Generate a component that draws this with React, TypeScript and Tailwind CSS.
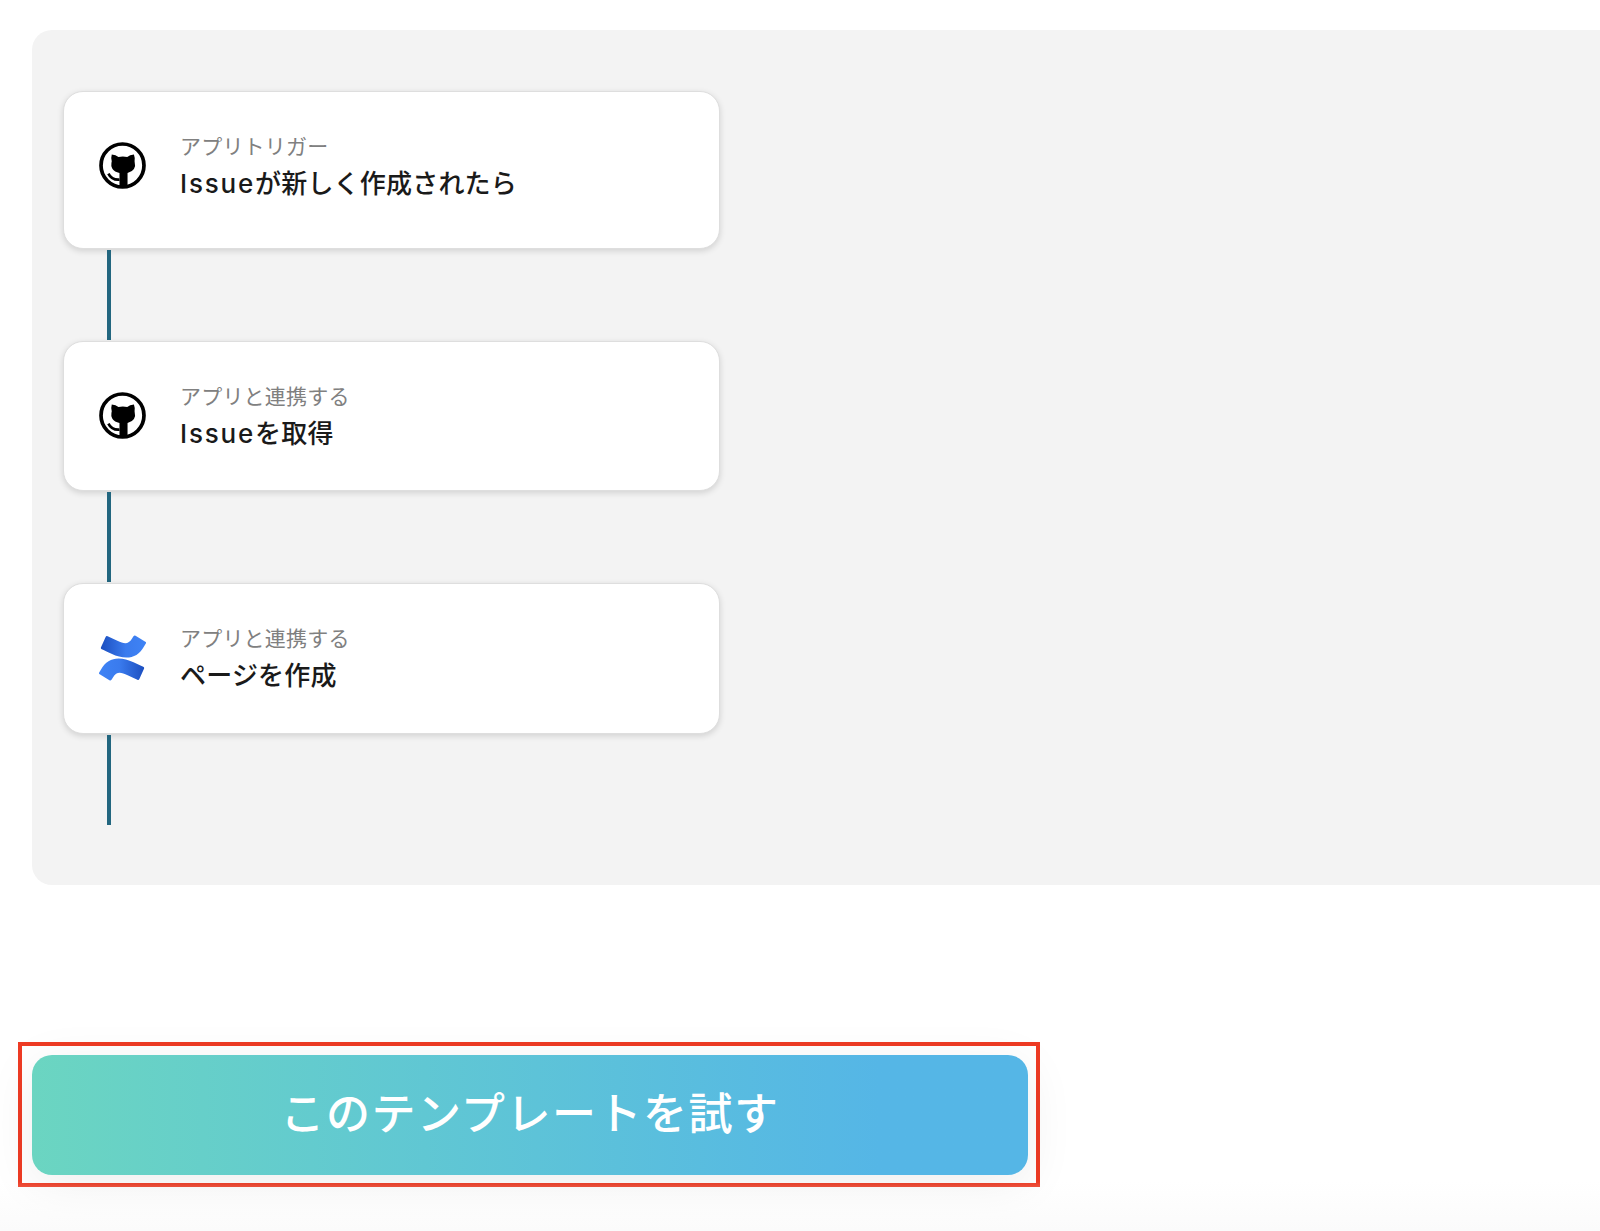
const FONT = "font-['Inter','Noto_Sans_CJK_JP','Noto_Sans',sans-serif]";

function GithubIcon() {
  return (
    <svg width="47" height="47" viewBox="0 0 140 140" className="shrink-0">
      <circle cx="70" cy="70" r="64" fill="#fff" stroke="#000" strokeWidth="11" />
      <path
        d="M38 37 Q50 38 58 45 Q71 42 84 45 Q92 38 104 37 Q108 48 106 57 Q113 85 85 92 L85 132 L61 132 L61 92 Q31 85 38 57 Q35 48 38 37 Z"
        fill="#000"
      />
      <path d="M28 94 Q38 114 61 112" fill="none" stroke="#000" strokeWidth="8" />
    </svg>
  );
}

function ConfluenceIcon() {
  return (
    <svg width="47" height="46" viewBox="0 0 24 24" preserveAspectRatio="none" className="shrink-0">
      <defs>
        <linearGradient id="confBottom" x1="0" y1="0" x2="1" y2="0">
          <stop offset="0" stopColor="#3f83f5" />
          <stop offset="0.45" stopColor="#3a7bee" />
          <stop offset="1" stopColor="#1c4fc0" />
        </linearGradient>
        <linearGradient id="confTop" x1="0" y1="0" x2="1" y2="0">
          <stop offset="0" stopColor="#1c4fc0" />
          <stop offset="0.55" stopColor="#3a7bee" />
          <stop offset="1" stopColor="#3f83f5" />
        </linearGradient>
      </defs>
      <path
        fill="url(#confBottom)"
        d="M.87 18.257c-.248.382-.53.875-.763 1.245a.764.764 0 0 0 .255 1.04l4.965 3.054a.764.764 0 0 0 1.058-.26c.199-.332.454-.763.733-1.221 1.967-3.247 3.945-2.853 7.508-1.146l4.957 2.337a.764.764 0 0 0 1.028-.382l2.364-5.346a.764.764 0 0 0-.382-1 599.851 599.851 0 0 1-4.965-2.361C10.911 10.97 4.503 11.2.87 18.257z"
      />
      <path
        fill="url(#confTop)"
        d="M23.131 5.743c.248-.382.53-.875.763-1.245a.764.764 0 0 0-.255-1.04L18.674.404a.764.764 0 0 0-1.058.26c-.199.332-.454.763-.733 1.221-1.967 3.247-3.945 2.853-7.508 1.146L4.418.694a.764.764 0 0 0-1.028.382L1.026 6.422a.764.764 0 0 0 .382 1c1.04.49 3.118 1.467 4.965 2.361 6.716 3.247 13.124 3.017 16.758-4.04z"
      />
    </svg>
  );
}

function FlowCard({ icon, label, title, height, pb }: { icon: React.ReactNode; label: string; title: React.ReactNode; height: string; pb: string }) {
  return (
    <div className={`${height} ${pb} w-[657px] flex items-center gap-[34px] pl-[35px] bg-white border border-[#dedede] rounded-[20px] shadow-[0_2px_6px_rgba(0,0,0,0.14)]`}>
      <div className="w-[47px] flex justify-center">{icon}</div>
      <div className="flex flex-col gap-[7px]">
        <p className="text-[21px] leading-[30px] tracking-[0.2px] text-[#808080]">{label}</p>
        <p className="text-[26px] leading-[30px] tracking-[0.2px] font-medium text-[#1a1a1a]">{title}</p>
      </div>
    </div>
  );
}

function Connector() {
  return <div className="ml-[44px] w-[4px] h-[90px] my-[1px] bg-[#22667f]" />;
}

const issue = <span className="tracking-[1.8px]">Issue</span>;

export default function App() {
  return (
    <div className={`${FONT} relative h-[1231px] overflow-hidden bg-white pt-[30px]`}>
      <div className="ml-[32px] h-[855px] rounded-l-[20px] bg-[#f3f3f3] pt-[61px] pl-[31px]">
        <FlowCard height="h-[158px]" pb="pb-[10px]" icon={<GithubIcon />} label="アプリトリガー" title={<>{issue}が新しく作成されたら</>} />
        <Connector />
        <FlowCard height="h-[150px]" pb="pb-[2px]" icon={<GithubIcon />} label="アプリと連携する" title={<>{issue}を取得</>} />
        <Connector />
        <FlowCard height="h-[151px]" pb="pb-[2px]" icon={<ConfluenceIcon />} label="アプリと連携する" title="ページを作成" />
        <Connector />
      </div>
      <div className="mt-[157px] ml-[18px] w-[1022px] h-[145px] border-[4px] border-[#ee3b24] pt-[9px] pl-[10px]">
        <button className="w-[996px] h-[120px] pb-[3px] rounded-[20px] bg-gradient-to-r from-[#6bd5c1] to-[#55b6e6] to-[85%] text-white text-[44px] tracking-[1.5px] font-medium shadow-[0_10px_50px_rgba(0,0,0,0.07)]">
          このテンプレートを試す
        </button>
      </div>
      <div className="absolute inset-x-0 bottom-0 h-[50px] bg-gradient-to-b from-transparent to-[#fbfbfb]" />
    </div>
  );
}
